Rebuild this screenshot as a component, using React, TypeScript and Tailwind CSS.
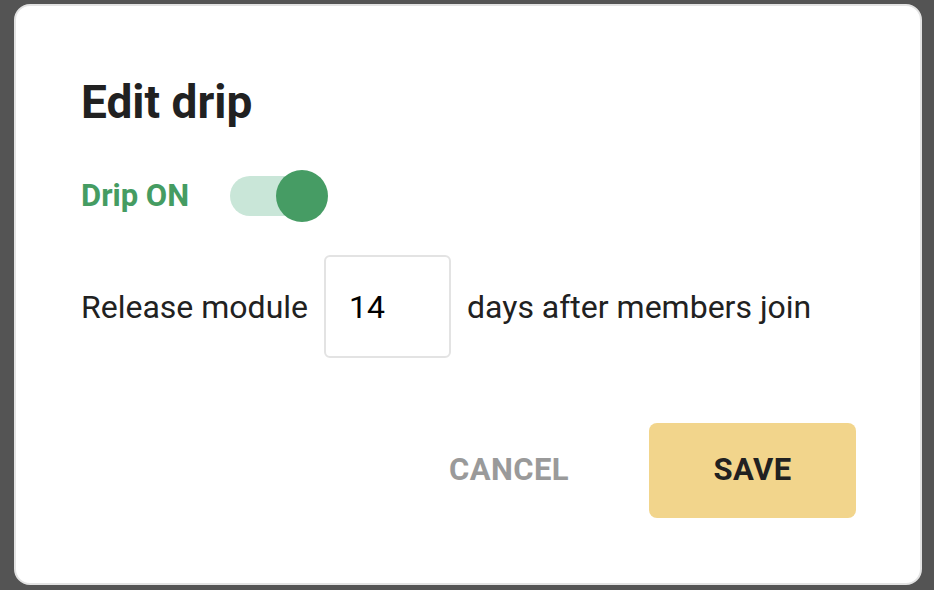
import { useState } from "react";

export default function App() {
    const [on, setOn] = useState(true);
    const [days, setDays] = useState("14");

    return (
        <div
            className="h-[590px] w-[934px] bg-[#545454] pl-[14px] pr-[12px] pt-[4px]"
            style={{ fontFamily: "Roboto, 'Liberation Sans', sans-serif" }}
        >
            {/* Dialog */}
            <div className="flex h-[581px] flex-col rounded-[16px] border-2 border-[#e3e3e3] bg-white pl-[65px] pr-[64px] pt-[69px]">
                <h1 className="text-[46px] font-bold leading-[1.2] text-[#212121]">Edit drip</h1>

                {/* Drip toggle */}
                <div className="mt-[40px] flex items-center gap-[41px]">
                    <span className="text-[31px] font-bold text-[#459c62]">Drip {on ? "ON" : "OFF"}</span>
                    <button
                        type="button"
                        onClick={() => setOn(!on)}
                        className="relative h-[52px] w-[98px]"
                    >
                        <span className="absolute left-0 top-[6px] h-[40px] w-[90px] rounded-full bg-[#c9e6d8]" />
                        <span className="absolute right-0 top-0 h-[52px] w-[52px] rounded-full bg-[#469c64]" />
                    </button>
                </div>

                {/* Release row */}
                <div className="mt-[33px] flex items-center gap-[16px] text-[32px] text-[#212121]">
                    <span>Release module</span>
                    <input
                        value={days}
                        onChange={(e) => setDays(e.target.value)}
                        className="h-[103px] w-[127px] rounded-[6px] border-2 border-[#e3e3e3] px-[23px] text-[32px] text-black outline-none"
                    />
                    <span>days after members join</span>
                </div>

                {/* Actions */}
                <div className="mt-[65px] flex items-center justify-end gap-[54px]">
                    <button type="button" className="px-[26px] py-[10px] text-[31px] font-bold tracking-[0.4px] text-[#9a9a9a]">
                        CANCEL
                    </button>
                    <button
                        type="button"
                        className="h-[95px] w-[207px] rounded-[8px] bg-[#f2d58c] text-[31px] font-bold tracking-[0.4px] text-[#212121]"
                    >
                        SAVE
                    </button>
                </div>
            </div>
        </div>
    );
}
